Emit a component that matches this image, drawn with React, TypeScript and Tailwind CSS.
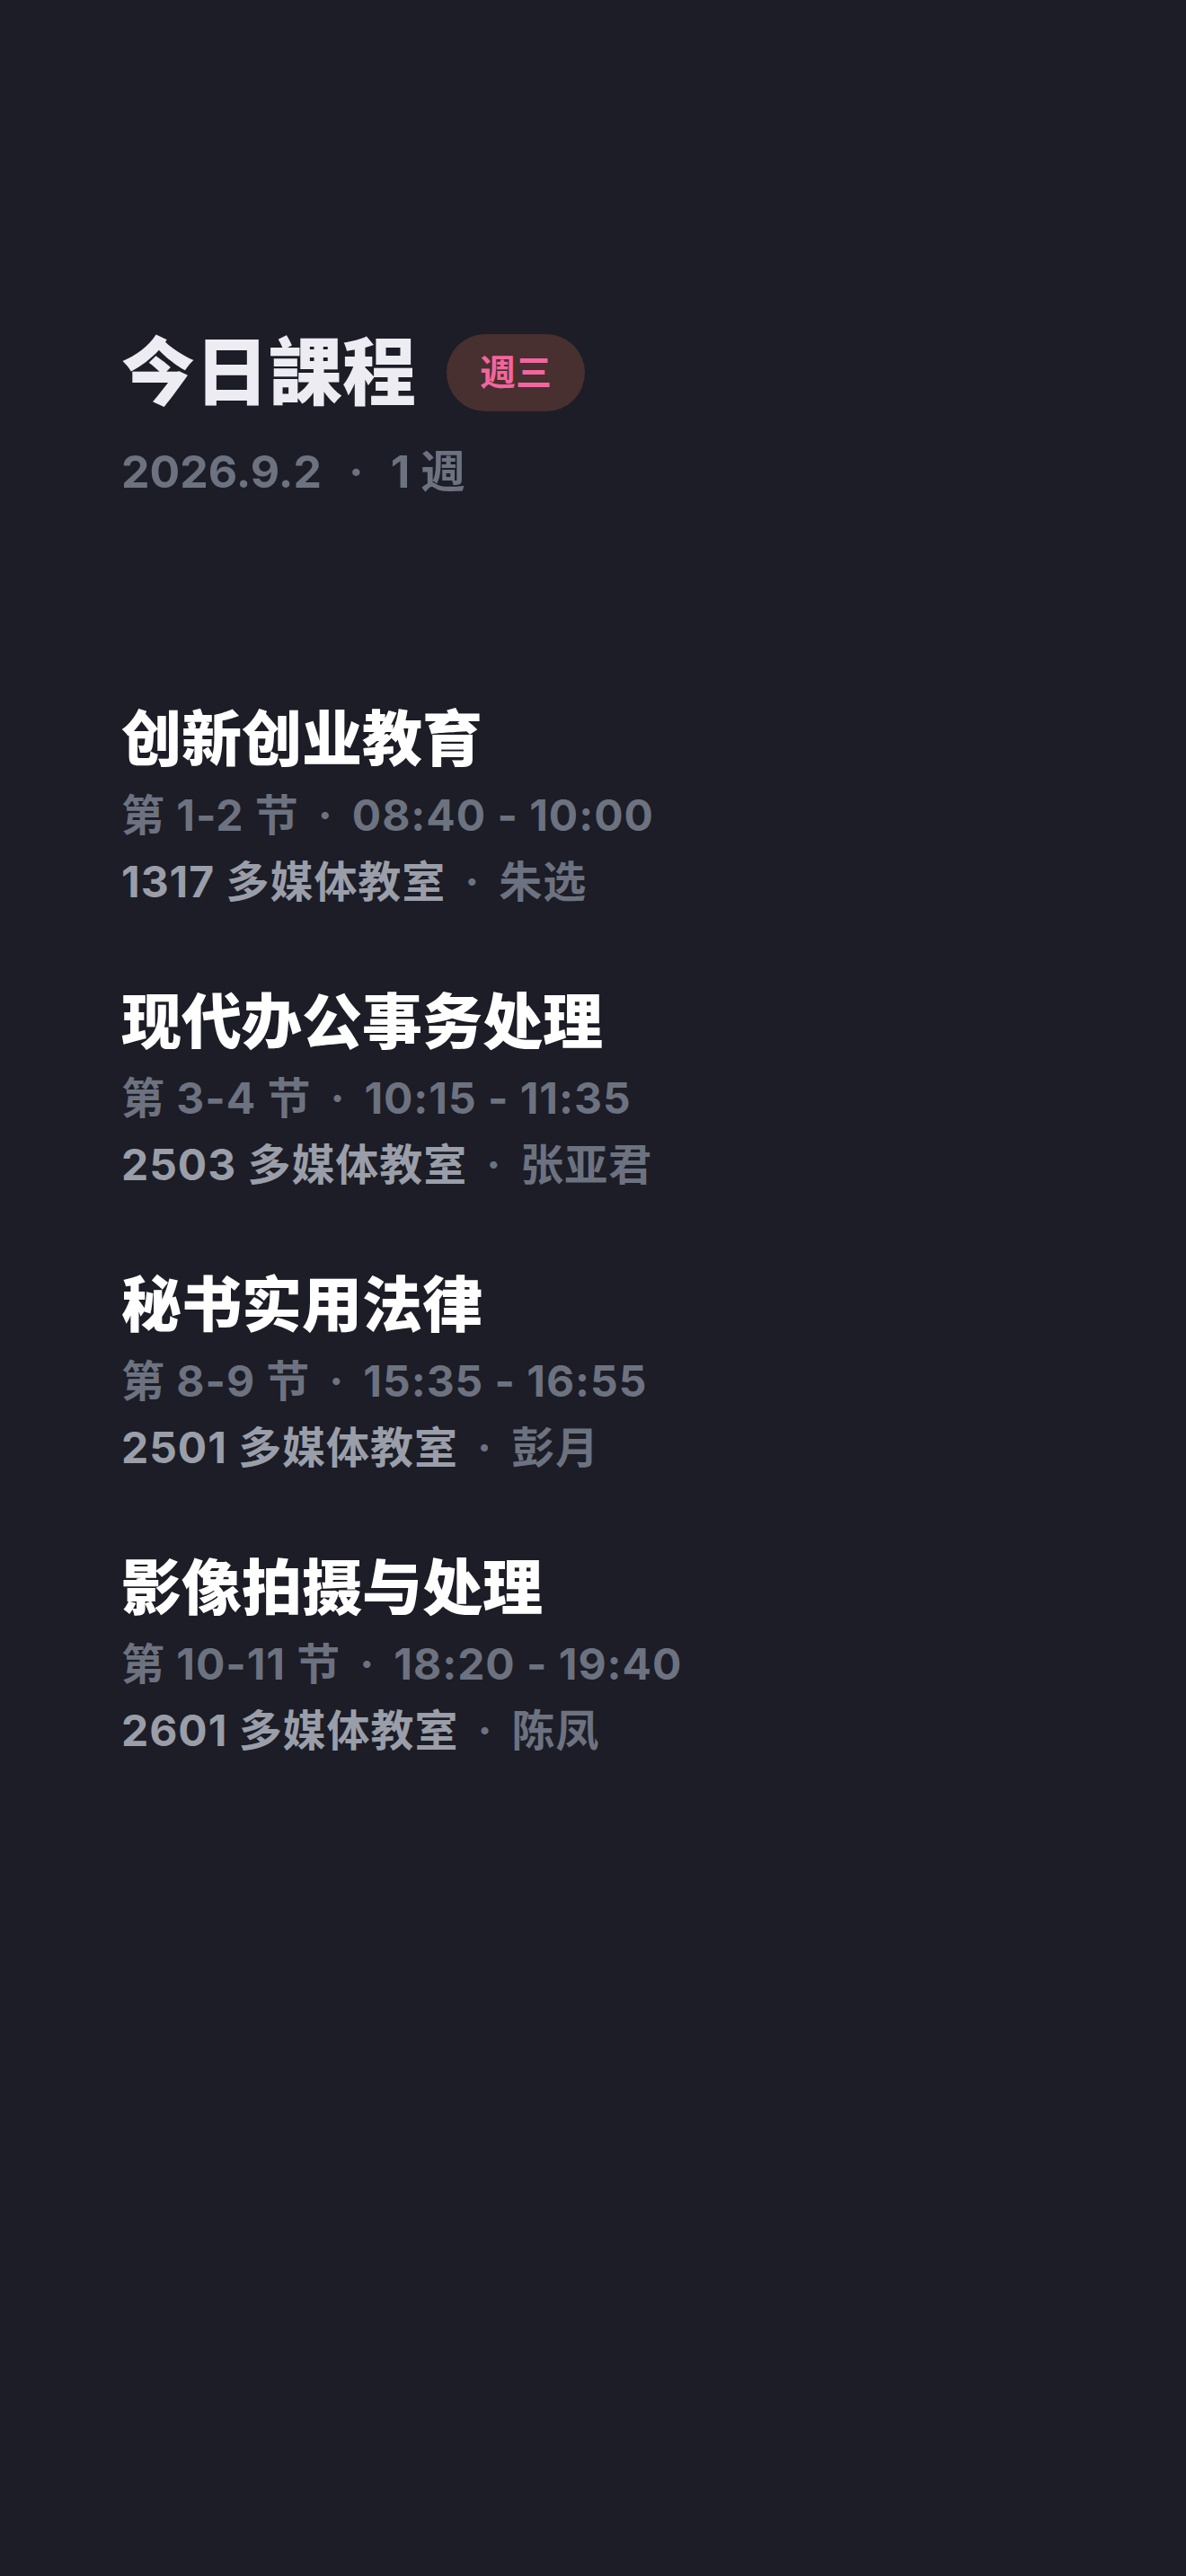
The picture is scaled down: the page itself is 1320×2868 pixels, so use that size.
const courses = [
  {
    name: "创新创业教育",
    periods: "1-2",
    time: "08:40 - 10:00",
    room: "1317 多媒体教室",
    teacher: "朱选",
  },
  {
    name: "现代办公事务处理",
    periods: "3-4",
    time: "10:15 - 11:35",
    room: "2503 多媒体教室",
    teacher: "张亚君",
  },
  {
    name: "秘书实用法律",
    periods: "8-9",
    time: "15:35 - 16:55",
    room: "2501 多媒体教室",
    teacher: "彭月",
  },
  {
    name: "影像拍摄与处理",
    periods: "10-11",
    time: "18:20 - 19:40",
    room: "2601 多媒体教室",
    teacher: "陈凤",
  },
];

function Dot() {
  return <span className="mx-[21px]">·</span>;
}

function CourseItem({ course }: { course: (typeof courses)[number] }) {
  return (
    <div className="flex flex-col">
      <h2 className="text-[67px] font-extrabold leading-[80px] text-white">
        {course.name}
      </h2>
      <div className="mt-[15px] text-[48px] font-bold leading-[60px] tracking-[0.02em] text-[#6d7280]">
        第 {course.periods} 节
        <Dot />
        {course.time}
      </div>
      <div className="mt-[14px] text-[48px] font-bold leading-[60px] tracking-[0.02em]">
        <span className="text-[#9a9ea9]">{course.room}</span>
        <span className="text-[#6d7280]">
          <Dot />
          {course.teacher}
        </span>
      </div>
    </div>
  );
}

export default function App() {
  return (
    <div
      className="min-h-[2868px] w-full bg-[#1c1d26] pl-[135px] pt-[367px]"
      style={{ fontFamily: '"Inter", "Noto Sans CJK SC", "Noto Sans CJK TC", sans-serif' }}
    >
      <header>
        <div className="flex items-center gap-[34px]">
          <h1 className="text-[82px] font-extrabold leading-[96px] text-[#ececf2]">
            今日課程
          </h1>
          <span className="flex h-[86px] w-[154px] items-center justify-center rounded-full bg-[#47302f] text-[40px] font-semibold text-[#f2669d]">
            週三
          </span>
        </div>
        <div className="mt-[30px] text-[50px] font-bold leading-[64px] text-[#6d7280]">
          2026.9.2
          <span className="mx-[30px]">·</span>1 週
        </div>
      </header>

      <main className="mt-[226px] flex flex-col gap-[86px]">
        {courses.map((c) => (
          <CourseItem key={c.name} course={c} />
        ))}
      </main>
    </div>
  );
}
